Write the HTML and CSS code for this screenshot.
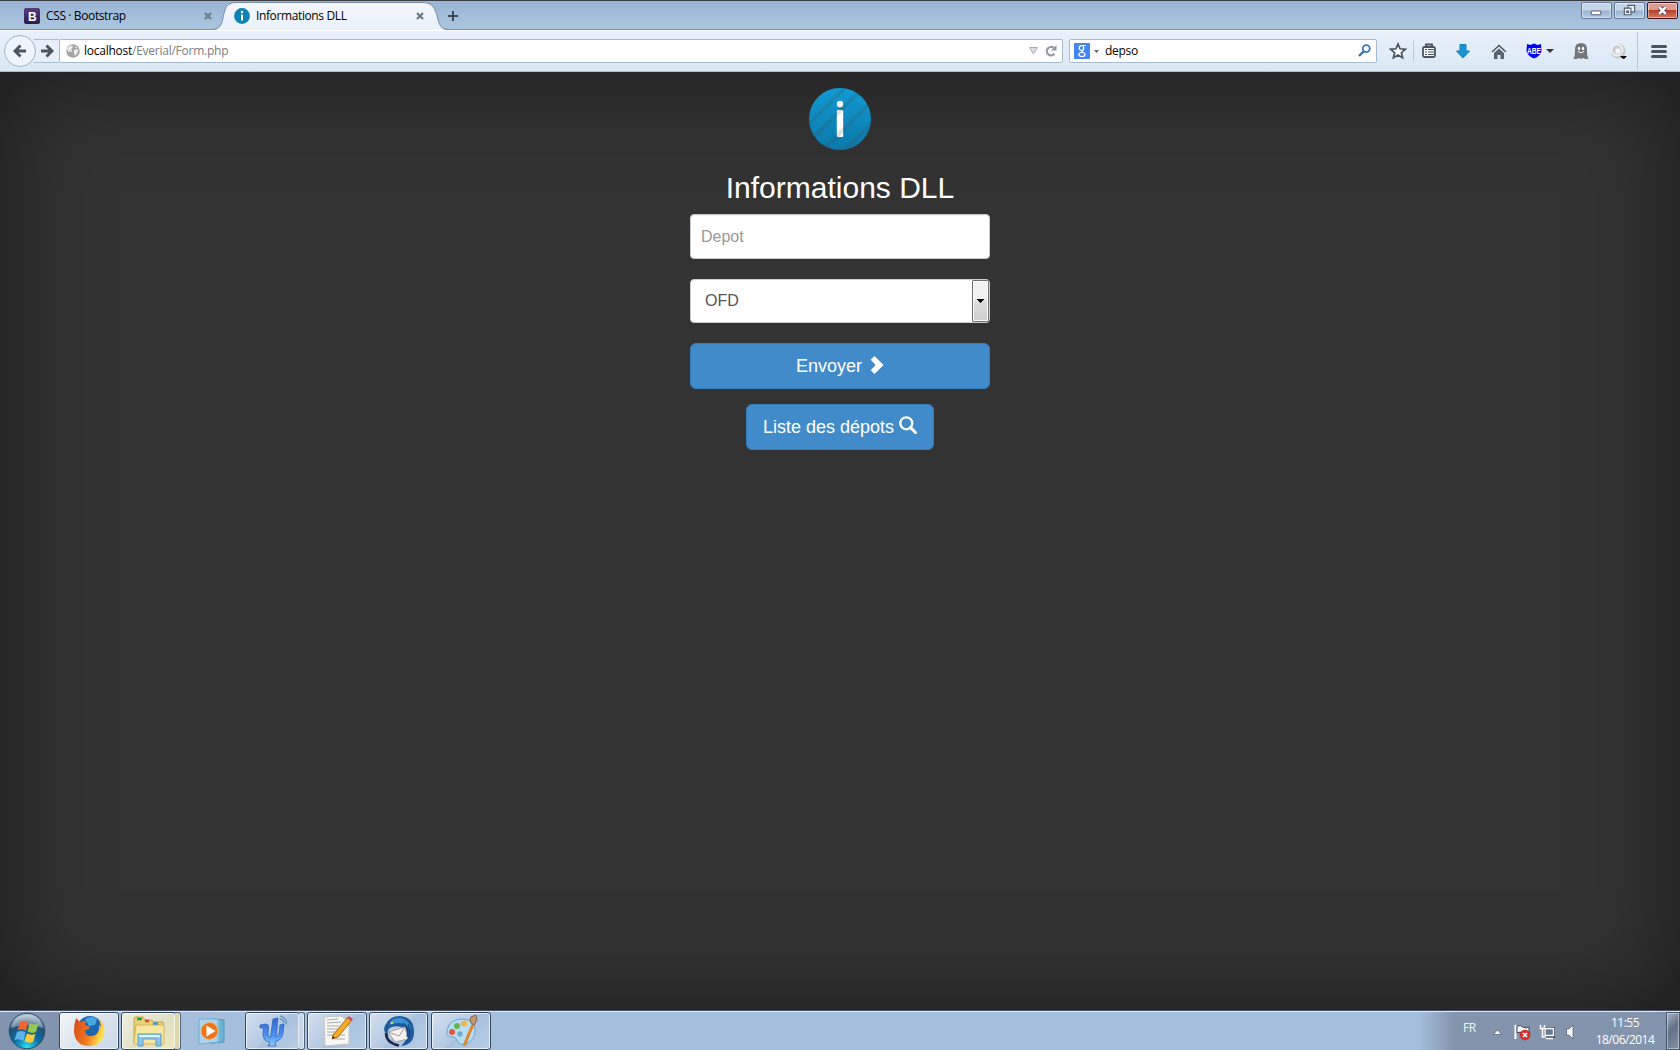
FILE: index.html
```html
<!DOCTYPE html>
<html lang="fr">
<head>
<meta charset="utf-8">
<title>Informations DLL</title>
<link rel="stylesheet" href="styles.css">
</head>
<body>
<div class="screen">
  <header class="tabs">
    <div class="tab">
      <svg class="favicon" viewBox="0 0 16 16"><defs><linearGradient id="bs" x2="0" y2="1"><stop stop-color="#563d7c"/><stop offset="1" stop-color="#2e1c4c"/></linearGradient></defs><rect width="16" height="16" rx="2" fill="url(#bs)"/><text x="4" y="12.5" class="fav-letter">B</text></svg>
      <span class="tab-title t-bootstrap">CSS · Bootstrap</span>
      <svg class="close" viewBox="0 0 8 8"><path d="M1 1l6 6M7 1l-6 6"/></svg>
    </div>
    <div class="tab active">
      <svg class="tab-shape" viewBox="0 0 240 29"><defs><linearGradient id="tabfill" x2="0" y2="1"><stop stop-color="#f4f7fc"/><stop offset="1" stop-color="#e9f1fa"/></linearGradient></defs><path d="M0 29.5C12 28 10 17 13 9Q15 1.500 24 1.500H211Q220 1.500 223 9C227 17 225 28 236 29.500Z" fill="url(#tabfill)"/><path d="M0 28.500C12 28 10 17 13 9Q15 1.500 24 1.500H211Q220 1.500 223 9C227 17 225 28 236 28.500" fill="none" stroke="#7890ab"/></svg>
      <svg class="favicon" viewBox="0 0 16 16"><circle cx="8" cy="8" r="7.900" fill="#0c82b5"/><circle cx="8" cy="4" r="1.200" fill="#fff"/><path d="M8 6.500v6" stroke="#fff" stroke-width="2"/></svg>
      <span class="tab-title t-info">Informations DLL</span>
      <svg class="close" viewBox="0 0 8 8"><path d="M1 1l6 6M7 1l-6 6"/></svg>
    </div>
    <svg class="new-tab" viewBox="0 0 10 10"><path d="M5 0v10M0 5h10"/></svg>
    <div class="win-controls">
      <span class="win"><svg viewBox="0 0 30 16"><rect x="9.500" y="8.500" width="10" height="4" rx=".5" fill="#fff" stroke="#505a70"/></svg></span>
      <span class="win"><svg viewBox="0 0 30 16"><g fill="#f4f7fb" stroke="#505a70" stroke-width="1.200"><path d="M13.500 2.500h7v7h-7z"/><path d="M9.500 5.500h7v7h-7z"/><path fill="#7d93b0" d="M12 8.500h2v1.500h-2z"/></g></svg></span>
      <span class="win win-close"><svg viewBox="0 0 30 16"><path d="M11.500 4.500l7 7M18.500 4.500l-7 7" stroke="#574758" stroke-width="4.600"/><path d="M11.500 4.500l7 7M18.500 4.500l-7 7" stroke="#fff" stroke-width="2.600"/></svg></span>
    </div>
  </header>

  <nav class="toolbar">
    <span class="back"><svg viewBox="0 0 14 14"><path d="M7.500 1.500L2 7l5.500 5.500M2.500 7H13"/></svg></span>
    <span class="forward"><svg viewBox="0 0 14 14"><path d="M6.500 1.500L12 7l-5.500 5.500M11.500 7H1"/></svg></span>
    <div class="field url">
      <svg class="globe" viewBox="0 0 14 14"><circle cx="7" cy="7" r="6.800" fill="#a5a5a5"/><path d="M1 4.500Q3 1.500 6 1.500L7 3 5 5.500 6.500 7 5 8 3.500 7 2 8ZM8 6l3-1 1.500 1L11 9.500 9 12 8 9ZM9 2l2.500 1.500-2 .5Z" fill="#eee"/></svg>
      <span class="address">localhost<span class="path">/Everial/Form.php</span></span>
      <svg class="history" viewBox="0 0 9 8"><path d="M.5.500h8L4.500 7z" fill="#d8dce0" stroke="#a9afb6"/></svg>
      <svg class="reload" viewBox="0 0 12 12"><path d="M9.300 8.800A4.200 4.200 0 1 1 8.600 2.800" fill="none" stroke="#8e99a6" stroke-width="2.200"/><path d="M6 5.500h5.500V0z" fill="#8e99a6"/></svg>
    </div>
    <div class="field search">
      <svg class="google" viewBox="0 0 16 16"><rect width="16" height="16" rx="1" fill="#4285f4"/><g fill="none" stroke="#fff" stroke-width="1.200"><ellipse cx="7.500" cy="5" rx="2.300" ry="2.400"/><path d="M9 2.500h3M9 7Q6 8 9.500 9.500"/><ellipse cx="7.900" cy="11.500" rx="3.100" ry="2"/></g></svg>
      <svg class="engine-caret" viewBox="0 0 5 3"><path d="M0 0h5L2.500 3z" fill="#666"/></svg>
      <span class="query">depso</span>
      <svg class="magnifier" viewBox="0 0 13 13"><circle cx="8.300" cy="4.600" r="3.500" fill="none" stroke="#3b79b3" stroke-width="1.800"/><path d="M5.500 7.500L1 12" stroke="#3b6faa" stroke-width="2.400"/></svg>
    </div>
    <div class="tools">
      <span class="tool star"><svg width="18" height="18" viewBox="0 0 18 18"><path d="M9 2l2.100 4.800 5.200.5-3.900 3.400 1.200 5.100L9 13.100l-4.600 2.700 1.200-5.100-3.900-3.400 5.200-.5z" fill="#f7fafd" stroke="#4b5560" stroke-width="1.700"/></svg></span>
      <span class="tool list"><svg width="16" height="16" viewBox="0 0 16 16"><path d="M5 3V1.500h6V3" fill="none" stroke="#4b5560" stroke-width="2"/><rect x="2" y="4" width="12" height="10" rx="1.500" fill="#f3f7fb" stroke="#4b5560" stroke-width="1.800"/><path d="M4 6.500h2M7 6.500h6M4 9h2M7 9h6M4 11.500h2M7 11.500h6" stroke="#4b5560" stroke-width="1.100"/></svg></span>
      <span class="tool download"><svg width="14" height="15" viewBox="0 0 14 15"><path d="M4 .5h6V7h3.500L7 14 .5 7H4z" fill="#1a94d5" stroke="#1480bd"/></svg></span>
      <span class="tool home"><svg width="16" height="15" viewBox="0 0 16 15"><path d="M1 8l7-6.500L15 8" fill="none" stroke="#4b5560" stroke-width="1.500"/><path d="M3 9l5-4.500L13 9v6H9.500v-4h-3v4H3z" fill="#59636e"/></svg></span>
      <span class="tool abe"><svg class="shield" width="16" height="16" viewBox="0 0 16 16"><path d="M1 1l3.500 1L8 .5 11.500 2 15 1l.5 7Q15 13 8 15.500 1 13 .5 8z" fill="#00f"/><text x="1" y="10.500" textLength="14" lengthAdjust="spacingAndGlyphs" class="abe-text">ABE</text></svg><svg width="8" height="4" viewBox="0 0 8 4"><path d="M0 0h8L4 4z" fill="#333"/></svg></span>
      <span class="tool ghost"><svg width="16" height="18" viewBox="0 0 16 18"><path d="M2 10V7Q2 1 8 1t6 6v3q0 4 1.500 7H12l-2-1-2 1-2-1-2 1H.5Q2 14 2 10z" fill="#74787c"/><ellipse cx="6" cy="6.500" rx="1.200" ry="1.700" fill="#fff"/><ellipse cx="10" cy="6.500" rx="1.200" ry="1.700" fill="#fff"/><path d="M5 9.500q3 2.500 6 0" fill="none" stroke="#fff"/></svg></span>
      <span class="tool ring"><svg width="17" height="17" viewBox="0 0 17 17"><circle cx="8" cy="8" r="5.500" fill="none" stroke="#c3c7cb" stroke-width="4"/><circle cx="7" cy="7" r="5.500" fill="none" stroke="#f3f3f3" stroke-width="2"/><circle cx="8" cy="8" r="3.200" fill="#f2f7fc" stroke="#ccd0d4"/><path d="M10.500 13h6v1h-1v1h-1v1h-2v-1h-1v-1h-1z" fill="#000"/></svg></span>
      <span class="tool menu"><svg width="16" height="13" viewBox="0 0 16 13"><path d="M1.500 1.500h13M1.500 6.500h13M1.500 11.500h13" stroke="#4b5560" stroke-width="3" stroke-linecap="round"/></svg></span>
    </div>
  </nav>

  <main class="page">
    <svg class="logo" viewBox="0 0 62 62"><defs><linearGradient id="lg" x2="0" y2="1"><stop stop-color="#0f9ad3"/><stop offset="1" stop-color="#0c78aa"/></linearGradient><clipPath id="lc"><circle cx="31" cy="31" r="31"/></clipPath></defs><circle cx="31" cy="31" r="31" fill="url(#lg)"/><circle cx="31" cy="16" r="3.200" fill="#fff"/><rect x="27.800" y="22" width="6.400" height="27" rx="1.200" fill="#fff"/><g clip-path="url(#lc)" stroke="#444" stroke-opacity=".16" stroke-width="4"><path d="M-2 38L38 -2M1 53L55 -1M16 60L61 15M33 65L66 32"/></g></svg>
    <h1 class="title">Informations DLL</h1>
    <form class="form">
      <input class="control" type="text" placeholder="Depot">
      <div class="select"><span class="value">OFD</span><span class="drop"><svg width="7" height="4" viewBox="0 0 7 4"><path d="M0 0h7v1H6v1H5v1H4v1H3V3H2V2H1V1H0z"/></svg></span></div>
      <button class="btn block" type="button">Envoyer <svg class="chevron" width="14" height="18" viewBox="0 0 14 18"><path d="M4.500 0L13.500 9l-9 9L.7 14.200 5.600 9 .7 3.800z" fill="#fff"/></svg></button>
    </form>
    <button class="btn" type="button">Liste des dépots <svg class="lens" width="18" height="18" viewBox="0 0 18 18"><circle cx="7.300" cy="7.300" r="6" fill="none" stroke="#fff" stroke-width="2.300"/><path d="M11.500 11.500l5 5" stroke="#fff" stroke-width="3" stroke-linecap="round"/></svg></button>
  </main>

  <footer class="taskbar">
    <div class="start"><svg width="38" height="38" viewBox="0 0 38 38"><defs><radialGradient id="orb" cx=".5" cy=".95" r=".9"><stop stop-color="#2ce0f5"/><stop offset=".4" stop-color="#0a6fa5"/><stop offset=".75" stop-color="#234e75"/><stop offset="1" stop-color="#a9bdcd"/></radialGradient></defs><circle cx="19" cy="19" r="17.800" fill="url(#orb)" stroke="#2a4d6c"/><path d="M3 16Q6 3 19 3T35 16Q19 10 3 16z" fill="#fff" opacity=".35"/><path d="M12 10q5-2.500 8 .5L18 19q-4-3-8.500-1z" fill="#ee6732"/><path d="M21.500 11q4 2.500 9 .5L28 20q-4 2-8.500-.5z" fill="#95c94d"/><path d="M9 20q5-2 8.500.5L15.500 29q-4-3-9-1z" fill="#5db3eb"/><path d="M19 21.500q4 2 8.500.5L25 30q-4 1.500-8.500-.5z" fill="#fdc936"/></svg></div>
    <div class="task lit w-firefox"><svg width="32" height="32" viewBox="0 0 32 32"><defs><linearGradient id="ff" x2="1" y2=".3"><stop stop-color="#d9461a"/><stop offset=".6" stop-color="#ee7a20"/><stop offset="1" stop-color="#ffe04a"/></linearGradient></defs><circle cx="17" cy="14" r="13" fill="#1d65ac"/><path d="M12 4q7-4 12 0l-2 6-6 1z" fill="#43a9df"/><path d="M3 3l4 4q3-2 6-1l-1 4 5 2q-1 3-5 3 0 6 6 6 5 0 7-4 2-3 1-7 1 1 1.500 2Q28 7 24 3q8 5 7.500 13Q30 31 16 31T1 16Q1 9 3 3z" fill="url(#ff)"/></svg></div>
    <div class="task lit folder w-folder"><svg width="34" height="32" viewBox="0 0 34 32"><path d="M2 28V4q0-2 2-2h7l2 3h7l1 2h10v21z" fill="#ecd27a" stroke="#c6a44b"/><path d="M4 10h28v19H2z" fill="#f8e7a0" stroke="#d5b65f"/><path d="M5 4h5" stroke="#1cab35" stroke-width="2.500"/><path d="M13 6h4" stroke="#d94731" stroke-width="2.500"/><path d="M21 8.500h5" stroke="#319be0" stroke-width="2.500"/><path d="M6 31V19h23v12h-5v-7H11v7z" fill="#87c6e8" stroke="#5b9fc5"/><path d="M7 21h21" stroke="#dff5ff" stroke-width="2"/></svg></div>
    <span class="stack stack-folder"></span>
    <div class="task plain w-media"><svg width="30" height="28" viewBox="0 0 30 28"><path d="M15 2l11 1v22l-11 1z" fill="#6eb5d5" stroke="#4d96bc"/><path d="M12 2l10 1v22l-10 1z" fill="#9bd2e9" stroke="#5ba5c8"/><path d="M1 2h19v23L1 27z" fill="#add4ee" stroke="#6daed2"/><circle cx="11.500" cy="14" r="8.500" fill="#ef7415" stroke="#fbb069"/><path d="M8.500 8.500v11l9-5.500z" fill="#fff"/></svg></div>
    <div class="task w-psi"><svg width="30" height="34" viewBox="0 0 30 34"><defs><linearGradient id="psi" x2="0" y2="1"><stop stop-color="#3567d3"/><stop offset=".6" stop-color="#4a8ff0"/><stop offset="1" stop-color="#8fd0ff"/></linearGradient></defs><path d="M2 11l6-1q3 0 2.500 4L10 20q0 3 2.500 3.500L15 5l5-1-2 19q3-1 3.500-5L22 11l4-1-1 9q-1 7-7.500 8.500L17 31h1v1h-8v-1h1.500v-3Q5 27 5 20l.5-6H2z" fill="url(#psi)" stroke="#2f66bd" stroke-width=".8"/><path d="M22 2q6 1 6.500 8M22 5q3.500.5 4 4" fill="none" stroke="#6591c0" stroke-width="1.300"/></svg></div>
    <span class="stack stack-psi"></span>
    <div class="task w-note"><svg width="32" height="32" viewBox="0 0 32 32"><path d="M3 2l17-1 8 6v22L4 31z" fill="#f7f7f5" stroke="#c4c4bf"/><path d="M6 5l11-1M6 8l14-1M6 11h12M6 14h10M6 17h9M6 20h7M18 20h6M14 24h10" stroke="#aaa" stroke-width="1"/><path d="M12 20L27 2l4 3-14 17-6 2z" fill="#f6ac26" stroke="#a66b19"/><path d="M26 3l2-2 4 3-2 2z" fill="#d9485f"/><path d="M11 24l1-3 2 2z" fill="#333"/></svg></div>
    <div class="task w-bird"><svg width="32" height="32" viewBox="0 0 32 32"><path d="M3 9Q7 1 17 1q14 1 14 16 0 13-13 14 6-5 6-13Q20 9 9 12q-7 3-3 10Q-2 15 3 9z" fill="#1f5c9c"/><path d="M6 10Q8 2 18 3q9 2 10 12-4-7-12-7-6 0-10 2z" fill="#3b92d2"/><path d="M5 17l17-5 3 12-13 3z" fill="#f4f1ee" stroke="#aaa5a0"/><path d="M5 17l11 4 6-9" fill="none" stroke="#a59d98"/><path d="M3 18q0 10 13 12.500" fill="none" stroke="#23284f" stroke-width="2.500"/><path d="M25 9q4 9-1 17M21 8q5 7 3 14" fill="none" stroke="#153e78"/><circle cx="9" cy="8" r="1.200" fill="#f5d663"/></svg></div>
    <div class="task w-paint"><svg width="34" height="34" viewBox="0 0 34 34"><path d="M3 17Q5 5 19 5q12 1 12 11t-9 14q-7 2-9-4-2-4-5-3-6 0-5-6z" fill="#b9def1" stroke="#63a8cd"/><circle cx="8" cy="18" r="3" fill="#e35941"/><circle cx="13" cy="12" r="3" fill="#65b752"/><circle cx="20" cy="9.500" r="3" fill="#f6b244"/><circle cx="16" cy="20" r="2.700" fill="#72acd0"/><path d="M30 8L20 32" stroke="#de8533" stroke-width="3"/><path d="M27 9q-2-4 0-6l5-2 1 5-3 5z" fill="#c19a70" stroke="#866443"/></svg></div>
    <div class="tray">
      <span class="lang">FR</span>
      <svg class="up" width="9" height="6" viewBox="0 0 9 6"><path d="M.5 5.500L4.500.800l4 4.700z" fill="#fff" stroke="#4c5b6c" stroke-width=".7"/></svg>
      <svg class="flag" width="17" height="17" viewBox="0 0 17 17"><path d="M1.500 1v14" stroke="#fff" stroke-width="2"/><path d="M3 2q4-1 6 1t6 0v7q-3 1-6-1T3 9z" fill="#fff" stroke="#374452"/><circle cx="11" cy="11" r="5" fill="#e12c28" stroke="#a61a1a" stroke-width=".5"/><path d="M9 9l4 4M13 9l-4 4" stroke="#fff" stroke-width="1.600"/></svg>
      <svg class="network" width="16" height="16" viewBox="0 0 16 16"><path d="M5 3h11v11H5z" fill="#3d4c5e"/><path d="M6 4.500h8.500v7H6z" fill="#667b91" stroke="#fff" stroke-width="1.400"/><path d="M7 14.500h7" stroke="#fff" stroke-width="1.500"/><path d="M1.500 1v3.500h4V1M3.500 4v9H7" fill="none" stroke="#fff" stroke-width="1.500"/></svg>
      <svg class="volume" width="8" height="16" viewBox="0 0 8 16"><path d="M.5 5H3l4-4v14l-4-4H.5z" fill="#fff" stroke="#46566a" stroke-width=".7"/></svg>
      <div class="clock"><span class="time">11:55</span><span class="date">18/06/2014</span></div>
      <span class="show-desktop"></span>
    </div>
  </footer>
</div>
</body>
</html>
```
FILE: styles.css
```css
* { box-sizing: border-box; }
body { margin: 0; overflow: hidden; font-family: "Open Sans", "Noto Sans", sans-serif; font-size: 12px; }
svg { display: block; flex: none; }
.screen { display: flex; flex-direction: column; width: 1680px; height: 1050px; }

/* tab strip */
.tabs { display: flex; height: 30px; border-top: 1px solid #3b3b42; border-bottom: 1px solid #7890ab; background: linear-gradient(#99b4d5, #adc6df); }
.tab { display: flex; width: 212px; height: 29px; padding: 7px 0 0 24px; position: relative; }
.tab > * { position: relative; }
.favicon { width: 16px; height: 16px; }
.fav-letter { font: bold 12px "Liberation Sans", sans-serif; fill: #fff; }
.tab-title { margin-left: 6px; height: 16px; line-height: 16px; white-space: nowrap; color: #000; }
.t-bootstrap { width: 160px; letter-spacing: -.38px; }
.t-info { width: 158px; letter-spacing: -.38px; }
.close { width: 8px; height: 8px; margin-top: 4px; fill: none; stroke: #6d7987; stroke-width: 2.2; }
.active { width: 236px; padding-left: 22px; }
.tab .tab-shape { position: absolute; left: 0; top: 0; width: 240px; height: 29px; }
.active .close { margin-left: 2px; }
.new-tab { width: 10px; height: 10px; margin: 10px 0 0; fill: none; stroke: #404a56; stroke-width: 2; }
.win-controls { display: flex; gap: 2px; margin: 1px 2px 0 auto; }
.win { width: 31px; height: 17px; border: 1px solid #647795; border-radius: 2px; background: linear-gradient(#c6d6e8 48%, #9cb3ce 52%, #b5cbe1); box-shadow: inset 0 0 0 1px rgba(255,255,255,.45); }
.win svg { width: 29px; height: 15px; }
.win-close { border-color: #431422; background: linear-gradient(#dc9d90 45%, #bd3f29 50%, #d47a61); }

/* navigation bar */
.toolbar { display: flex; align-items: flex-start; height: 42px; padding: 4px 0 0 4px; border-top: 1px solid #fff; border-bottom: 1px solid #a9bdd0; background: linear-gradient(#e9f1fa, #d9e8f6); }
.back { display: grid; flex: none; place-items: center; width: 32px; height: 32px; border: 1px solid #9fb3c8; border-radius: 50%; background: #eff5fc; z-index: 1; }
.back svg, .forward svg { width: 14px; height: 14px; fill: none; stroke: #4b5560; stroke-width: 3; }
.forward { display: grid; flex: none; place-items: center; width: 25px; height: 24px; margin: 4px 0 0 -2px; border: solid #aabed1; border-width: 1px 0; background: #e7f0f9; }
.field { display: flex; flex: none; align-items: center; height: 24px; margin-top: 4px; border: 1px solid #a6bacd; border-radius: 2px; background: #fff; }
.url { width: 1004px; padding-left: 6px; }
.globe { width: 14px; height: 14px; }
.address { margin-left: 4px; letter-spacing: -.25px; white-space: nowrap; line-height: 20px; }
.path { color: #7d7d7d; }
.history { width: 9px; height: 8px; margin-left: auto; }
.reload { width: 12px; height: 12px; margin: 0 5px 0 7px; }
.search { width: 308px; margin-left: 6px; padding-left: 4px; }
.google { width: 16px; height: 16px; }
.engine-caret { width: 5px; height: 3px; margin-left: 4px; }
.query { margin-left: 6px; letter-spacing: -.3px; line-height: 20px; }
.magnifier { width: 13px; height: 13px; margin: 0 5px 2px auto; }
.tools { display: flex; flex: 1; height: 38px; margin-top: -3px; }
.tool { display: flex; flex: none; align-items: center; justify-content: center; }
.star { width: 41px; }
.list { width: 31px; margin: 9px 0 9px -5px; border-left: 1px solid #b7c6d5; }
.download { width: 37px; }
.home { width: 36px; }
.abe { width: 46px; gap: 4px; }
.shield { overflow: visible; }
.abe-text { font: bold 9px "Liberation Sans", sans-serif; fill: #fff; }
.ghost { width: 36px; padding-bottom: 1px; }
.ring { width: 38px; }
.menu { width: 43px; border-left: 1px solid #b7c6d5; }

/* page */
.page { display: flex; flex-direction: column; align-items: center; height: 939px; padding-top: 16px; background: #333; box-shadow: inset 0 0 100px rgba(0,0,0,.5); font-family: "Liberation Sans", Arial, sans-serif; }
.logo { width: 62px; height: 62px; }
.title { margin: 21px 0 10px; font-size: 30px; font-weight: 500; line-height: 33px; color: #fff; }
.form { display: flex; flex-direction: column; width: 300px; }
.control { height: 45px; margin: 0 0 20px; padding: 10px; border: 1px solid #ccc; border-radius: 4px; box-shadow: inset 0 1px 1px rgba(0,0,0,.075); font: 16px "Liberation Sans", Arial, sans-serif; background: #fff; }
.control::placeholder { color: #999; }
.select { display: flex; height: 44px; border: 1px solid #ccc; border-radius: 4px; background: #fff; font-size: 16px; line-height: 42px; color: #555; }
.value { flex: 1; padding-left: 14px; }
.drop { display: grid; place-items: center; width: 17px; border: 1px solid #707070; border-radius: 1px; background: linear-gradient(#f2f2f2 45%, #ddd 50%, #cfcfcf); box-shadow: inset 0 0 0 1px #fcfcfc; }
.btn { display: flex; align-items: center; justify-content: center; height: 46px; padding: 0 16px; gap: 5px; border: 1px solid #357ebd; border-radius: 6px; background: #428bca; color: #fff; font: 18px "Liberation Sans", Arial, sans-serif; }
.block { margin: 20px 0 15px; }
.chevron { margin: -3px 0 0 3px; }
.lens { margin-top: -4px; }

/* taskbar */
.taskbar { display: flex; height: 39px; border-top: 1px solid #dce7f4; background: #a6bfdd; box-shadow: 0 -1px #455266; position: relative; }
.start { display: flex; width: 59px; padding-left: 8px; background: #8395ae; }
.task { display: grid; flex: none; place-items: center; height: 38px; padding-bottom: 1px; border: 1px solid #36485f; border-radius: 3px; background: linear-gradient(135deg, #d3e0ef 0%, #b5c9e2 50%, #a9c1df 52%, #b9cee6); box-shadow: inset 0 0 0 1px rgba(255,255,255,.65); }
.lit { background: linear-gradient(135deg, #f2f6fa, #d9e2ed 55%, #cbd9e9); }
.w-firefox { width: 60px; }
.w-folder { width: 55px; margin-left: 2px; }
.folder { background: linear-gradient(135deg, #f1efdc, #dfdfc5 60%, #f1ebba); }
.stack { flex: none; width: 6px; height: 38px; margin-left: -1px; border: 1px solid #53647a; border-left: 0; border-radius: 0 3px 3px 0; background: #c7d7ea; box-shadow: inset -1px 0 #e6eef7; }
.stack-folder { background: #ddd7ad; }
.plain { width: 64px; border: 0; background: none; box-shadow: none; }
.w-psi { width: 55px; }
.w-note { width: 60px; margin-left: 2px; }
.w-bird { width: 59px; margin-left: 2px; }
.w-paint { width: 60px; margin-left: 3px; }
.tray { display: flex; align-items: center; width: 262px; margin-left: auto; background: linear-gradient(90deg, rgba(131,149,172,0), #8395ac 36px); color: #fff; }
.lang { width: 15px; margin: -7px 0 0 45px; letter-spacing: -.4px; color: #eef3f8; }
.up { margin: 2px 0 0 15px; }
.flag { margin: 2px 0 0 12px; }
.network { margin: 2px 0 0 8px; }
.volume { margin: 2px 0 0 11px; }
.clock { display: flex; flex-direction: column; align-items: center; width: 60px; margin: 0 11px 0 auto; line-height: 17px; white-space: nowrap; letter-spacing: -.5px; }
.show-desktop { width: 14px; height: 38px; border: 1px solid #48576a; background: linear-gradient(135deg, #a4b2c3, #627287 45%, #8493a7); box-shadow: inset 0 0 0 1px rgba(255,255,255,.4); }
```
